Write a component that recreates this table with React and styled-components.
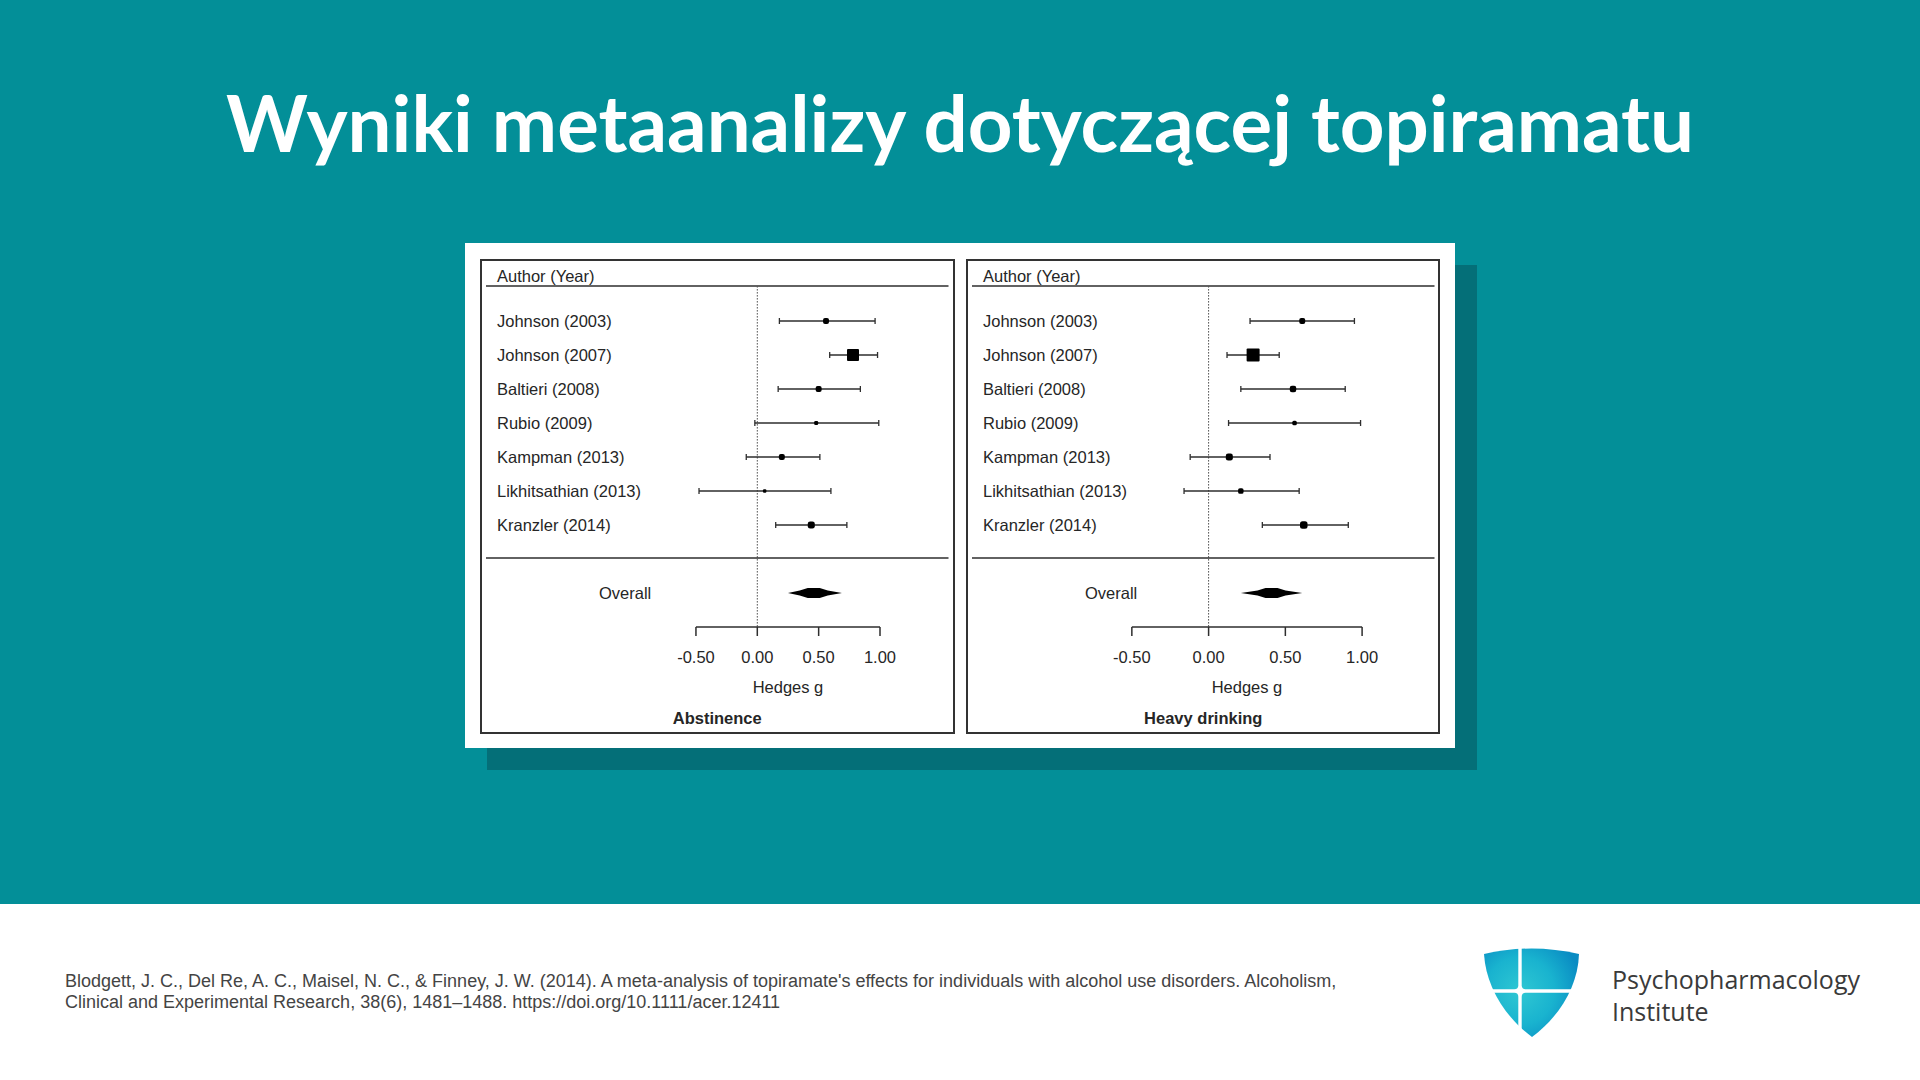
import React from 'react';
import styled, { createGlobalStyle } from 'styled-components';

const GlobalStyle = createGlobalStyle`
  html, body {
    margin: 0;
    padding: 0;
  }
  body {
    width: 1920px;
    height: 1080px;
    overflow: hidden;
    font-family: "Liberation Sans", Arial, sans-serif;
  }
`

const Page = styled.div`
    display: flex;
    flex-direction: column;
    width: 1920px;
    height: 1080px;
`

const Stage = styled.section`
    height: 904px;
    box-sizing: border-box;
    padding-top: 83px;
    background: #038f98;
    display: flex;
    flex-direction: column;
    align-items: center;
`

const Title = styled.h1`
    margin: 0;
    font-family: Lato, "Noto Sans", sans-serif;
    font-weight: 700;
    font-size: 78px;
    line-height: 78px;
    color: #ffffff;
`

const Card = styled.div`
    margin-top: 82px;
    width: 990px;
    height: 505px;
    box-sizing: border-box;
    padding: 16px 15px 14px;
    background: #ffffff;
    box-shadow: 22px 22px 0 #046f78;
    display: grid;
    grid-template-columns: 1fr 1fr;
    gap: 11px;
`

const Panel = styled.div`
    border: 2px solid #333;
    box-sizing: border-box;
    svg {
        display: block;
        width: 100%;
        height: 100%;
    }
`

const Label = styled.text`
    font-family: "Liberation Sans", Arial, sans-serif;
    font-size: 16.5px;
    font-weight: ${p => (p.$bold ? 700 : 400)};
    fill: #262626;
`

const Footer = styled.footer`
    flex: 1;
    background: #ffffff;
    display: flex;
    align-items: center;
    justify-content: space-between;
    padding: 0 60px 0 65px;
`

const Citation = styled.p`
    margin: 0;
    font-family: "Liberation Sans", Arial, sans-serif;
    font-size: 18px;
    line-height: 21px;
    color: #444;
`

const Logo = styled.div`
    display: flex;
    align-items: center;
    gap: 33px;
`

const LogoText = styled.div`
    margin-top: 6px;
    font-family: "Open Sans", "Noto Sans", sans-serif;
    font-size: 25px;
    line-height: 32px;
    color: #3a3a3a;
`

const abstinence = [
    { name: "Johnson (2003)", lo: 0.18, est: 0.56, hi: 0.96, size: 6 },
    { name: "Johnson (2007)", lo: 0.59, est: 0.78, hi: 0.98, size: 12 },
    { name: "Baltieri (2008)", lo: 0.17, est: 0.50, hi: 0.84, size: 6 },
    { name: "Rubio (2009)", lo: -0.02, est: 0.48, hi: 0.99, size: 4 },
    { name: "Kampman (2013)", lo: -0.09, est: 0.20, hi: 0.51, size: 6 },
    { name: "Likhitsathian (2013)", lo: -0.475, est: 0.06, hi: 0.60, size: 3.5 },
    { name: "Kranzler (2014)", lo: 0.15, est: 0.44, hi: 0.73, size: 7 },
];

const heavy = [
    { name: "Johnson (2003)", lo: 0.27, est: 0.61, hi: 0.95, size: 6 },
    { name: "Johnson (2007)", lo: 0.12, est: 0.29, hi: 0.46, size: 13 },
    { name: "Baltieri (2008)", lo: 0.21, est: 0.55, hi: 0.89, size: 6.5 },
    { name: "Rubio (2009)", lo: 0.13, est: 0.56, hi: 0.99, size: 4.5 },
    { name: "Kampman (2013)", lo: -0.12, est: 0.135, hi: 0.40, size: 7 },
    { name: "Likhitsathian (2013)", lo: -0.16, est: 0.21, hi: 0.59, size: 5.5 },
    { name: "Kranzler (2014)", lo: 0.35, est: 0.62, hi: 0.91, size: 7.5 },
];

const W = 474.5;
const H = 475;
const ink = "#2e2e2e";

const ForestPlot = ({ rows, zero, scale, overall, title }) => {
    const x = v => zero + v * scale;
    const ticks = [-0.5, 0, 0.5, 1];
    const [o0, om, o1] = overall.map(x);
    const oy = 334;

    return (
        <Panel>
            <svg viewBox={`2 2 ${W - 4} ${H - 4}`}>
                <Label x="17" y="23">Author (Year)</Label>
                <line x1="6" y1="27" x2={W - 6} y2="27" stroke={ink} strokeWidth="1.4" />
                <line x1={zero} y1="27" x2={zero} y2="368" stroke="#555" strokeWidth="1" strokeDasharray="1.6 1.4" />

                {rows.map((r, i) => {
                    const cy = 62 + i * 34;
                    return (
                        <g key={r.name}>
                            <Label x="17" y={cy + 6}>{r.name}</Label>
                            <line x1={x(r.lo)} y1={cy} x2={x(r.hi)} y2={cy} stroke={ink} strokeWidth="1.3" />
                            <line x1={x(r.lo)} y1={cy - 3} x2={x(r.lo)} y2={cy + 3} stroke={ink} strokeWidth="1.3" />
                            <line x1={x(r.hi)} y1={cy - 3} x2={x(r.hi)} y2={cy + 3} stroke={ink} strokeWidth="1.3" />
                            <rect
                                x={x(r.est) - r.size / 2}
                                y={cy - r.size / 2}
                                width={r.size}
                                height={r.size}
                                rx={r.size > 8 ? 1 : r.size / 3}
                                fill="#000"
                            />
                        </g>
                    );
                })}

                <line x1="6" y1="299" x2={W - 6} y2="299" stroke={ink} strokeWidth="1.4" />

                <Label x="119" y={oy + 6}>Overall</Label>
                <polygon
                    points={`${o0},${oy} ${om - 14},${oy - 2.6} ${om - 6},${oy - 5} ${om + 6},${oy - 5} ${om + 14},${oy - 2.6} ${o1},${oy} ${om + 14},${oy + 2.6} ${om + 6},${oy + 5} ${om - 6},${oy + 5} ${om - 14},${oy + 2.6}`}
                    fill="#000"
                />

                <line x1={x(-0.5)} y1="368" x2={x(1)} y2="368" stroke={ink} strokeWidth="1.5" />
                {ticks.map(t => (
                    <g key={t}>
                        <line x1={x(t)} y1="368" x2={x(t)} y2="377" stroke={ink} strokeWidth="1.5" />
                        <Label x={x(t)} y="404" textAnchor="middle">{t.toFixed(2)}</Label>
                    </g>
                ))}
                <Label x={(x(-0.5) + x(1)) / 2} y="434" textAnchor="middle">Hedges g</Label>
                <Label x={W / 2} y="465" textAnchor="middle" $bold>{title}</Label>
            </svg>
        </Panel>
    );
};

const Shield = () => (
    <svg width="95" height="92" viewBox="0 0 95 92">
        <defs>
            <radialGradient id="shieldFill" cx="36" cy="45" r="62" gradientUnits="userSpaceOnUse">
                <stop offset="0" stopColor="#2fc7d3" />
                <stop offset="0.55" stopColor="#19b3cf" />
                <stop offset="1" stopColor="#0a8cc3" />
            </radialGradient>
            <clipPath id="shieldClip">
                <path d="M0 8 Q47.5 -3 95 8 C94 40 76 70 48 91 C20 70 2 40 0 8 Z" />
            </clipPath>
        </defs>
        <g clipPath="url(#shieldClip)" fill="url(#shieldFill)">
            <rect x="-6" y="-6" width="40.3" height="49.3" rx="4" />
            <rect x="37.7" y="-6" width="64" height="49.3" rx="4" />
            <rect x="-6" y="46.7" width="40.3" height="52" rx="4" />
            <rect x="37.7" y="46.7" width="64" height="52" rx="4" />
        </g>
    </svg>
);

const App = () => {
    return (
        <Page>
            <GlobalStyle />
            <Stage>
                <Title>Wyniki metaanalizy dotyczącej topiramatu</Title>
                <Card>
                    <ForestPlot rows={abstinence} zero={277.3} scale={122.7} overall={[0.25, 0.46, 0.69]} title="Abstinence" />
                    <ForestPlot rows={heavy} zero={242.6} scale={153.5} overall={[0.21, 0.41, 0.61]} title="Heavy drinking" />
                </Card>
            </Stage>
            <Footer>
                <Citation>
                    Blodgett, J. C., Del Re, A. C., Maisel, N. C., &amp; Finney, J. W. (2014). A meta-analysis of topiramate's effects for individuals with alcohol use disorders. Alcoholism,
                    <br />
                    Clinical and Experimental Research, 38(6), 1481–1488. https://doi.org/10.1111/acer.12411
                </Citation>
                <Logo>
                    <Shield />
                    <LogoText>
                        Psychopharmacology
                        <br />
                        Institute
                    </LogoText>
                </Logo>
            </Footer>
        </Page>
    );
};

export default App;
